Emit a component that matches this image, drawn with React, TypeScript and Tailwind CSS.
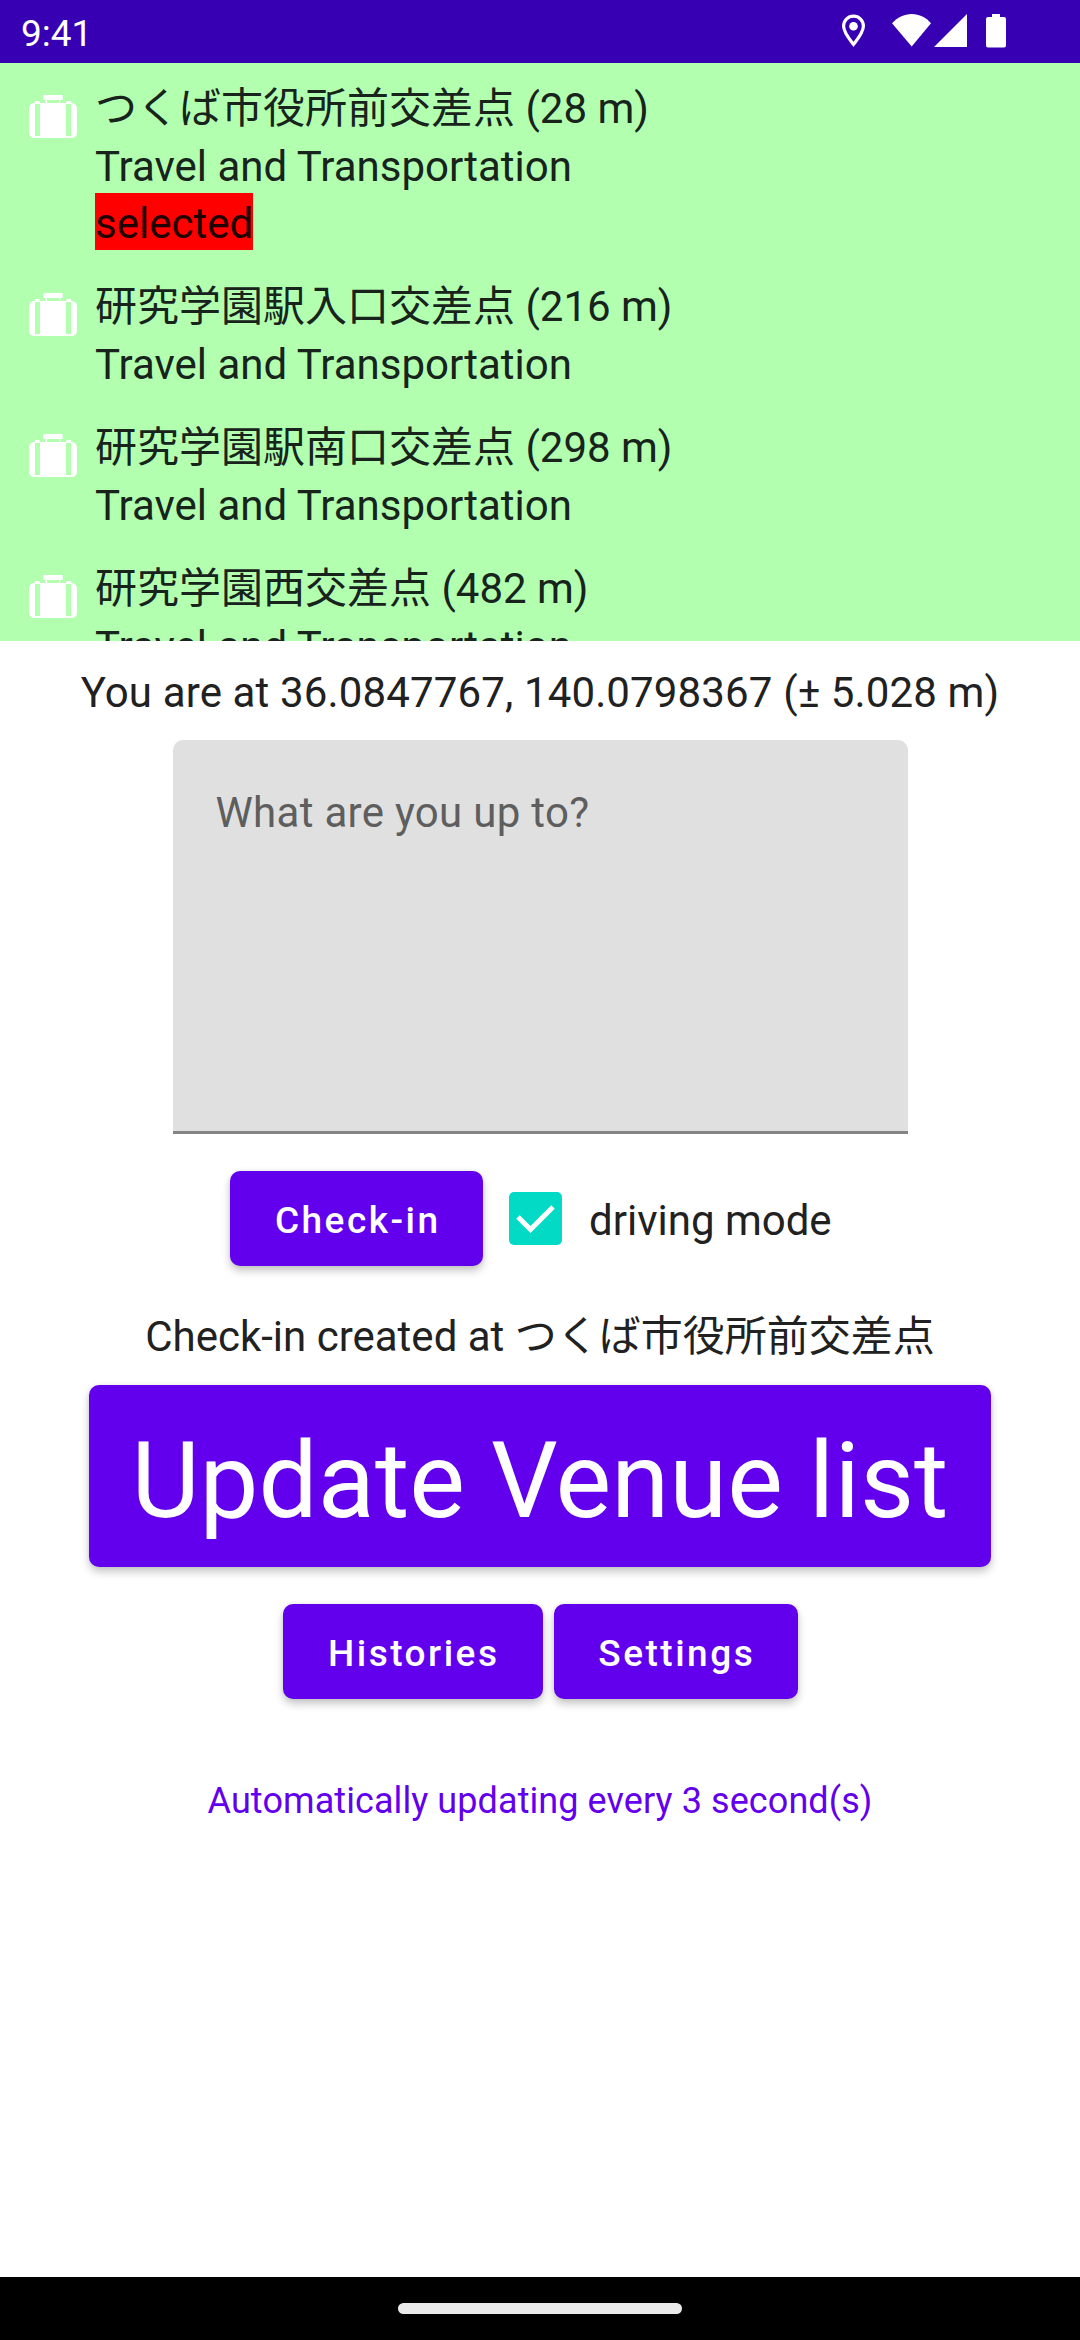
import React from "react";

function Suitcase() {
  return (
    <svg className="mt-[17px] h-[43px] w-[48px] shrink-0" viewBox="0 0 48 43" fill="#fff">
      <path d="M14.3 1Q14.3 0 15.3 0H32.7Q33.7 0 33.7 1V4Q33.7 5 32.7 5H31.5V8H37V43H11V8H16.7V5H15.3Q14.3 5 14.3 4ZM18 5V8H30.2V5Z" />
      <path d="M5.7 8V7Q5.7 6 6.7 6H9.7Q10.7 6 10.7 7V8H11V9H6V41H11V43H6Q0 43 0 37V14Q0 8 5.7 8Z" />
      <path d="M42.3 8V7Q42.3 6 41.3 6H38.3Q37.3 6 37.3 7V8H37V9H42V41H37V43H42Q48 43 48 37V14Q48 8 42.3 8Z" />
    </svg>
  );
}

const venues = [
  { name: "つくば市役所前交差点 (28 m)", selected: true },
  { name: "研究学園駅入口交差点 (216 m)" },
  { name: "研究学園駅南口交差点 (298 m)" },
  { name: "研究学園西交差点 (482 m)" },
];

const smallLabel = "h-[95px] pl-[2.5px] pt-[4px] text-[37px] font-medium tracking-[2.5px]";

function Button({ label, className }: { label: string; className: string }) {
  return (
    <button
      className={`rounded-[10px] bg-[#6200ee] text-white shadow-[0_5px_8px_rgba(0,0,0,0.22),0_0_4px_rgba(0,0,0,0.08)] ${className}`}
    >
      {label}
    </button>
  );
}

function StatusIcons() {
  return (
    <svg className="h-[63px] w-[190px]" viewBox="0 0 190 63" fill="#fff">
      <path
        d="M13.5 16.2c-5.6 0-9.9 4.4-9.9 9.9 0 6.6 6.6 14 9.9 18.3 3.3-4.3 9.9-11.7 9.9-18.3 0-5.5-4.3-9.9-9.9-9.9z"
        fill="none"
        stroke="#fff"
        strokeWidth="3.2"
      />
      <circle cx="13.5" cy="26.3" r="4.3" />
      <path d="M71.7 46.5 52 23.2C57.5 17.5 64 14 71.7 14S86 17.5 91 23.2Z" />
      <path d="M127 14V47H94Z" />
      <path d="M152 14h8v3h4q2 0 2 2v26.5q0 2-2 2h-16q-2 0-2-2V19q0-2 2-2h4z" />
    </svg>
  );
}

export default function App() {
  return (
    <div className="flex h-[2340px] w-[1080px] flex-col overflow-hidden whitespace-nowrap bg-white font-[Roboto,'Noto_Sans_CJK_JP',sans-serif] text-[42px] text-[#212121]">
      <header className="flex h-[63px] shrink-0 items-center justify-between bg-[#3700b3] pl-[21px] pr-[50px] text-[37px] text-white">
        <span className="pt-[4px]">9:41</span>
        <StatusIcons />
      </header>
      <main className="flex flex-1 flex-col items-center">
        <ul className="h-[578px] w-full shrink-0 overflow-hidden bg-[#b2ffb0] pt-[15px] text-[#17231b]">
          {venues.map((v) => (
            <li key={v.name} className="mb-[26px] flex gap-[18px] pl-[29px]">
              <Suitcase />
              <div className="leading-[61px]">
                <p className="h-[58px]">{v.name}</p>
                <p className="h-[57px]">Travel and Transportation</p>
                {v.selected && <p className="h-[57px] w-fit bg-[#ff0000] text-[#210000]">selected</p>}
              </div>
            </li>
          ))}
        </ul>
        <p className="mt-[26px] h-[73px] leading-[52px] tracking-[0.14px]">
          You are at 36.0847767, 140.0798367 (± 5.028 m)
        </p>
        <textarea
          className="h-[394px] w-[735px] shrink-0 resize-none rounded-t-[10px] border-b-[3px] border-[#848484] bg-[#e0e0e0] px-[43px] py-[47px] leading-[52px] tracking-[0.3px] outline-none placeholder:text-[#5e5e5e]"
          placeholder="What are you up to?"
        />
        <div className="mt-[37px] flex h-[95px] w-full items-center pl-[230px]">
          <Button label="Check-in" className={`w-[253px] ${smallLabel}`} />
          <svg className="ml-[26px] h-[53px] w-[53px]" viewBox="0 0 53 53">
            <rect width="53" height="53" rx="5" fill="#03dac5" />
            <path d="M9 25 21.5 37.5 44 15" fill="none" stroke="#fff" strokeWidth="5" />
          </svg>
          <span className="ml-[27px] pt-[3px]">driving mode</span>
        </div>
        <p className="mt-[41px] h-[78px] leading-[60px]">Check-in created at つくば市役所前交差点</p>
        <Button label="Update Venue list" className="h-[182px] w-[902px] shrink-0 pt-[12px] text-[105px]" />
        <div className="mt-[37px] flex gap-[11px]">
          <Button label="Histories" className={`w-[260px] ${smallLabel}`} />
          <Button label="Settings" className={`w-[244px] ${smallLabel}`} />
        </div>
        <p className="mt-[79px] text-[36px] leading-[46px] tracking-[0.08px] text-[#6200ee]">
          Automatically updating every 3 second(s)
        </p>
      </main>
      <footer className="flex h-[63px] shrink-0 items-center justify-center bg-black">
        <div className="h-[11px] w-[284px] rounded-full bg-[#ebebeb]" />
      </footer>
    </div>
  );
}
